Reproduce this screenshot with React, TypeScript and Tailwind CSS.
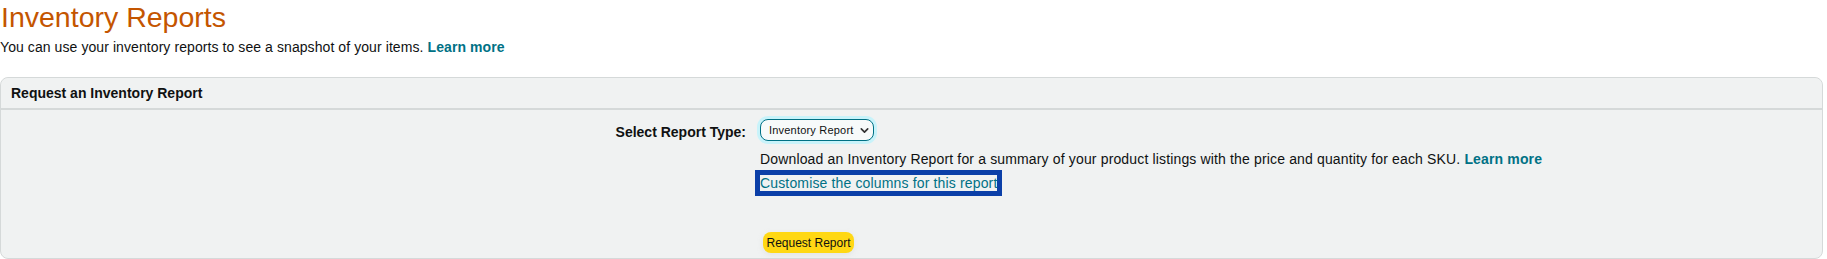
import React from "react";

export default function App() {
  return (
    <div className="w-[1827px] h-[259px] bg-white overflow-hidden text-[#0f1111]" style={{ fontFamily: '"Liberation Sans", Arial, sans-serif' }}>
      <h1 className="pl-[1px] text-[28.5px] leading-[34px] text-[#c45500] font-normal">Inventory Reports</h1>
      <p className="mt-[3px] text-[14px] leading-[20px] tracking-[0.08px]">
        You can use your inventory reports to see a snapshot of your items.{" "}
        <a className="font-bold text-[#007185]">Learn more</a>
      </p>
      <div className="mt-[20px] mr-[4px] h-[182px] border border-[#d5d9d9] rounded-lg bg-[#f0f2f2] overflow-hidden">
        <div className="h-[32px] flex items-center px-[10px] border-b-2 border-[#d5d9d9] bg-[#f0f2f2] rounded-t-lg">
          <span className="text-[14px] font-bold">Request an Inventory Report</span>
        </div>
        <div className="grid grid-cols-[745px_1fr] gap-x-[14px] pt-[9px]">
          <div className="flex justify-end items-start pt-[3px]">
            <span className="text-[14px] font-bold leading-[20px]">Select Report Type:</span>
          </div>
          <div className="flex flex-col items-start">
            <button className="h-[22px] w-[114px] flex items-center justify-start gap-[5px] whitespace-nowrap pl-[8px] rounded-[8px] border border-[#007185] bg-[#f7fafa] shadow-[0_0_0_3px_#c8f3fa] text-[11px] tracking-[0.2px]">
              <span>Inventory Report</span>
              <svg width="11" height="11" viewBox="0 0 12 12" fill="none" className="shrink-0">
                <path d="M2.5 4.2 6 7.7 9.5 4.2" stroke="#333" strokeWidth="1.8" strokeLinecap="round" strokeLinejoin="round" />
              </svg>
            </button>
            <p className="mt-[8px] text-[14px] leading-[20px] tracking-[0.15px]">
              Download an Inventory Report for a summary of your product listings with the price and quantity for each SKU.{" "}
              <a className="font-bold text-[#007185]">Learn more</a>
            </p>
            <a className="-ml-[5px] mt-[1px] border-[5px] border-[#0b3fa8] text-[14px] leading-[16px] tracking-[0.15px] text-[#007185] whitespace-nowrap">
              Customise the columns for this report
            </a>
            <button className="mt-[36px] ml-[3px] h-[21px] w-[91px] rounded-[8px] bg-[#ffd814] text-[12px] shadow-[0_2px_5px_rgba(213,217,217,0.5)]">
              Request Report
            </button>
          </div>
        </div>
      </div>
    </div>
  );
}
